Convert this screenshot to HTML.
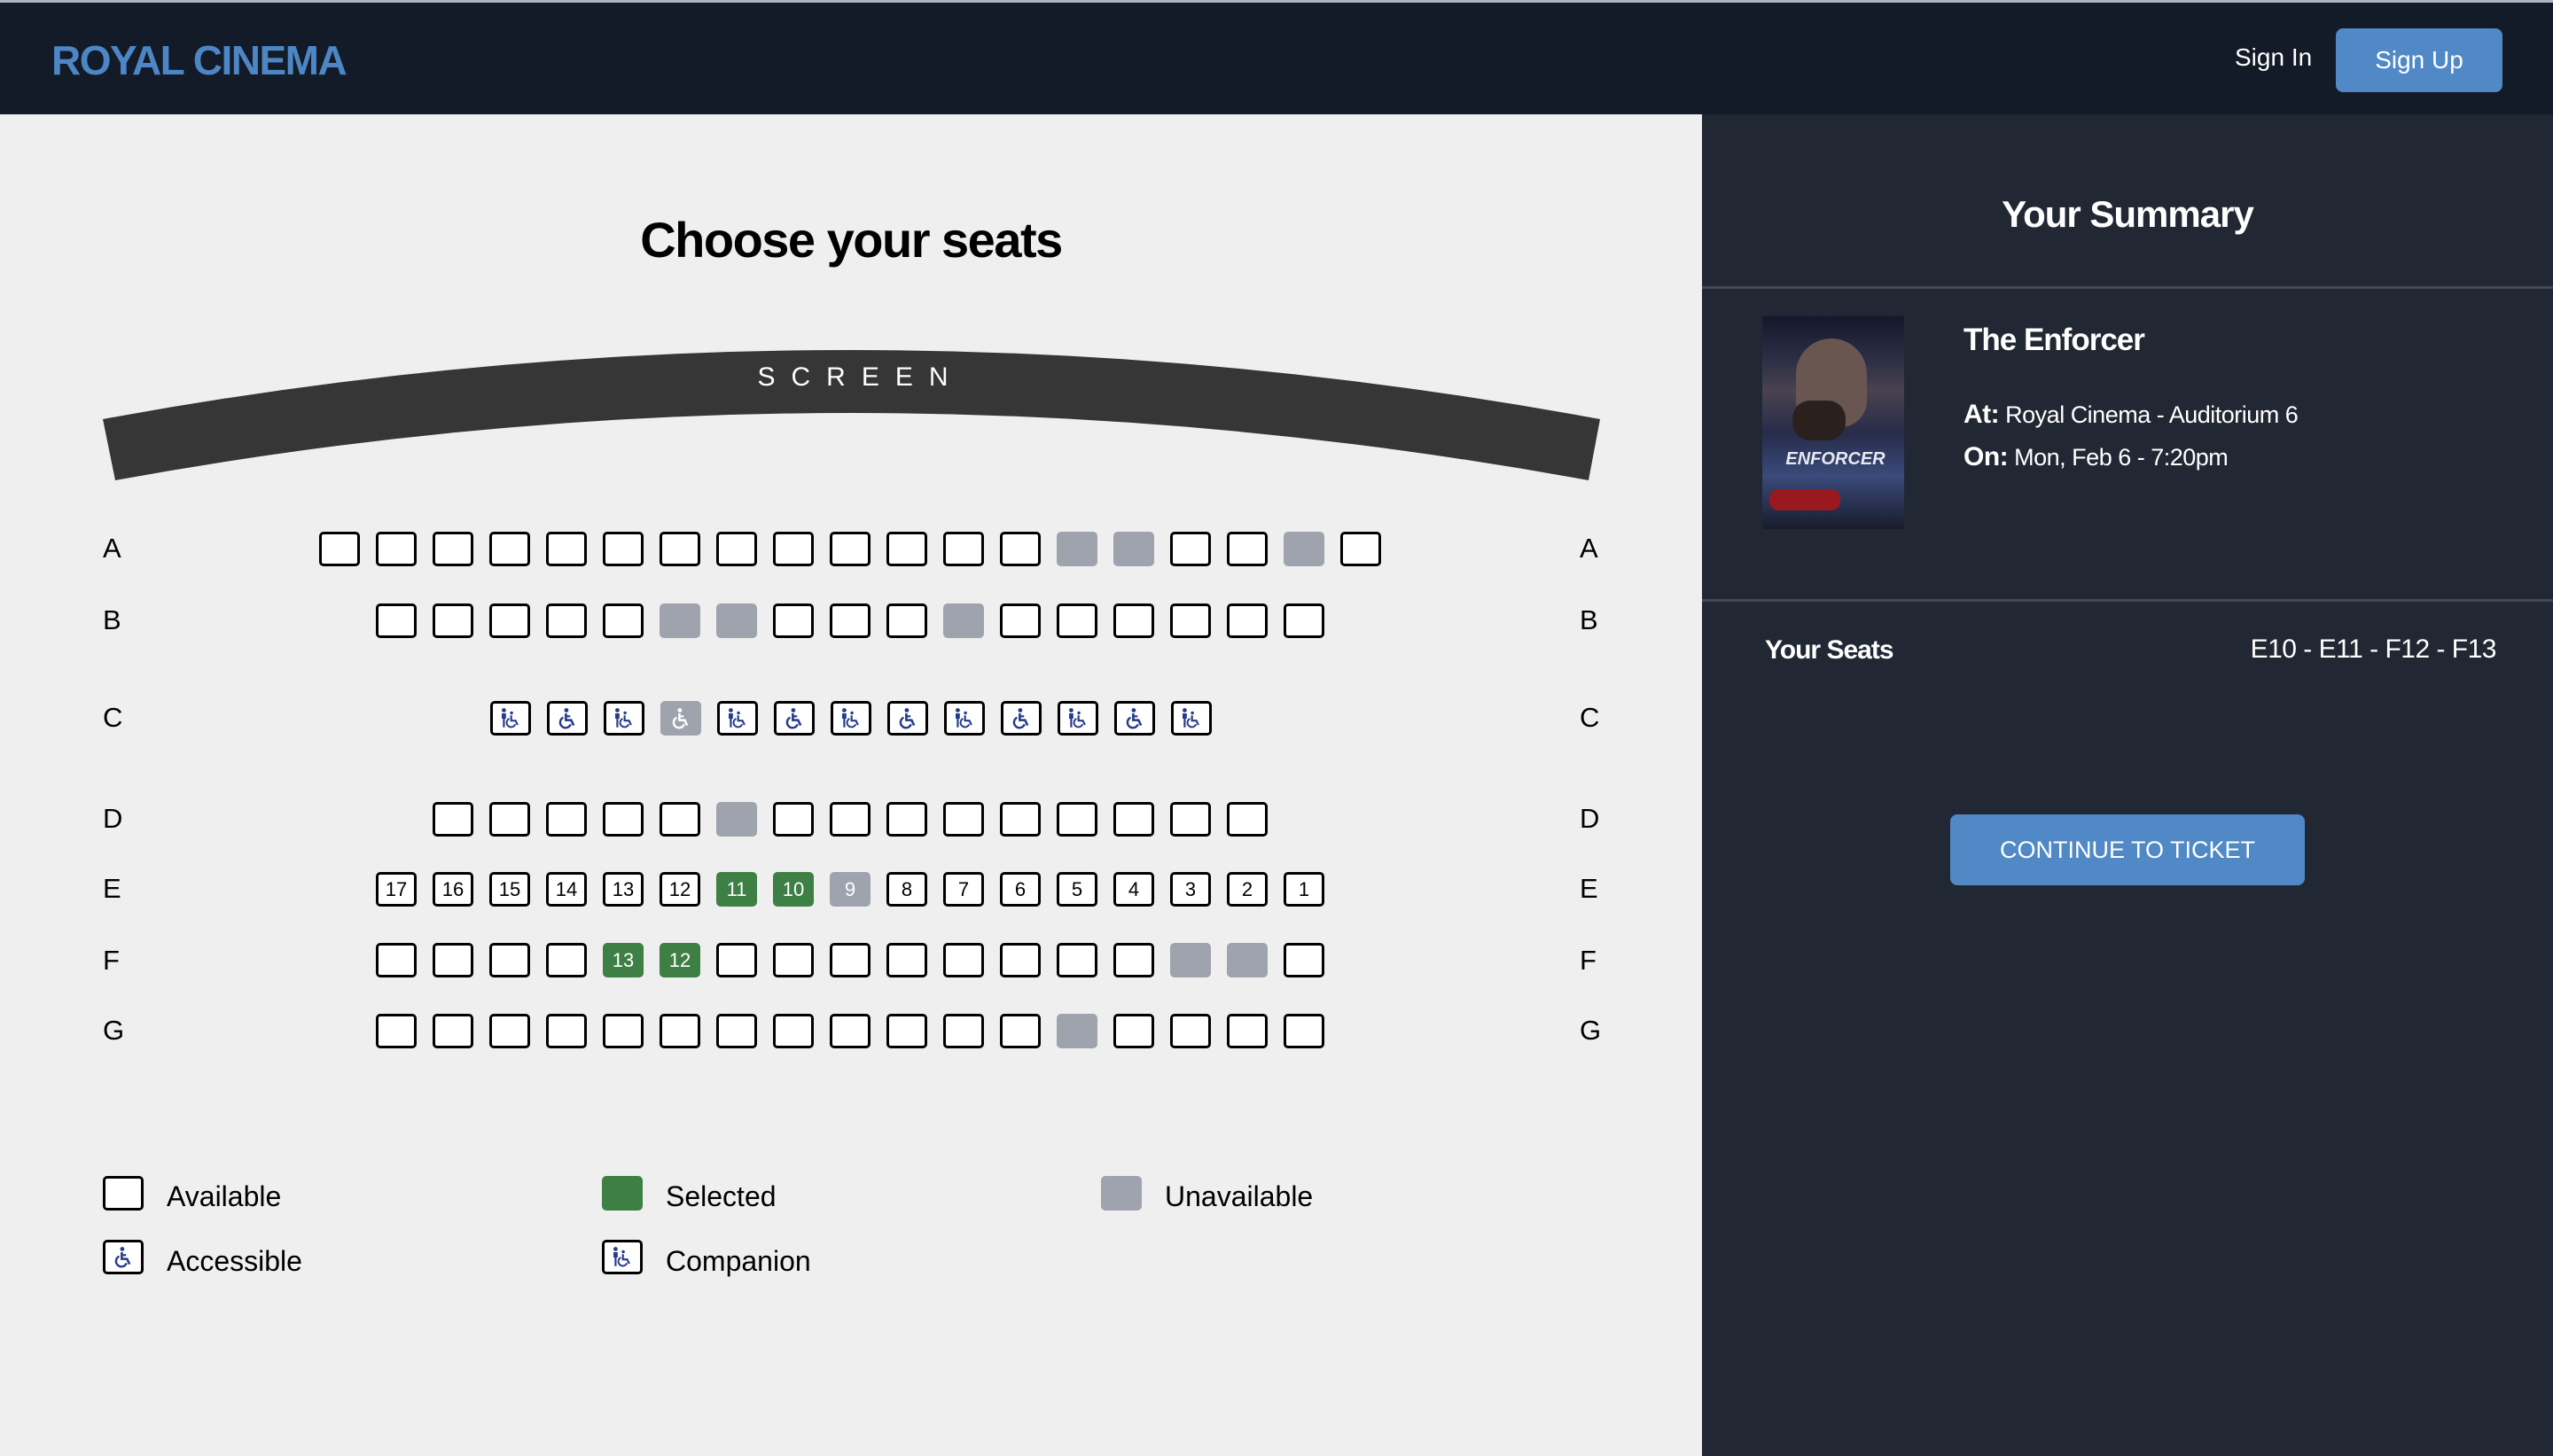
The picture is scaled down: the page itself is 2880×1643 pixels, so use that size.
<!DOCTYPE html>
<html><head><meta charset="utf-8"><style>
*{margin:0;padding:0;box-sizing:border-box}
body{width:2880px;height:1643px;overflow:hidden;font-family:"Liberation Sans",sans-serif;background:#efefef;position:relative}
.hdr{position:absolute;left:0;top:0;width:2880px;height:129px;background:#121b27;border-top:3px solid #a9b4c6}
.logo{position:absolute;left:58px;top:38px;font-size:46px;font-weight:bold;color:#4d86c4;letter-spacing:-1.5px}
.signin{position:absolute;left:2521px;top:46px;font-size:28px;color:#fff}
.signup{position:absolute;left:2635px;top:29px;width:188px;height:72px;background:#5089c6;border-radius:8px;color:#fff;font-size:28px;text-align:center;line-height:72px}
.right{position:absolute;left:1920px;top:129px;width:960px;height:1514px;background:#212733}
.abs{position:absolute}
.row{position:absolute;display:flex;gap:18px}
.s{width:46px;height:39px;border:3px solid #000;border-radius:5px;background:#fff;display:flex;align-items:center;justify-content:center;font-size:22px;color:#000}
.u{background:#9ea3ad;border-color:#9ea3ad}
.g{background:#3d7f45;border-color:#3d7f45;color:#fff}
.gu{background:#9ea3ad;border-color:#9ea3ad;color:#fff}
.lbl{position:absolute;font-size:31px;color:#000}
.leg{position:absolute;font-size:32px;color:#000}
svg.i{width:28px;height:26px;color:#253a8a}
.u svg.i{color:#fff}
</style></head><body>
<svg width="0" height="0" style="position:absolute">
<defs>
<symbol id="acc" viewBox="0 0 24 24"><circle cx="11" cy="3.2" r="2.2" fill="currentColor"/><path d="M10.5 6.5v7h5.5l2.6 5.5" fill="none" stroke="currentColor" stroke-width="2.4"/><path d="M10.5 9.5h4.5" stroke="currentColor" stroke-width="2"/><path d="M7.8 10.8a5.6 5.6 0 1 0 7.6 7" fill="none" stroke="currentColor" stroke-width="2.2"/></symbol>
<symbol id="comp" viewBox="0 0 24 24"><circle cx="5" cy="3.2" r="2.2" fill="currentColor"/><path d="M2.8 6.5h4.4v5.5h-1.2v9h-2v-9h-1.2z" fill="currentColor"/><circle cx="13" cy="6" r="1.6" fill="currentColor"/><path d="M12.6 8.5v5.5h4.5l2.2 4.5" fill="none" stroke="currentColor" stroke-width="2"/><path d="M10.5 12a4.6 4.6 0 1 0 6.3 5.8" fill="none" stroke="currentColor" stroke-width="1.8"/></symbol>
</defs></svg>

<div class="hdr"><div class="logo">ROYAL CINEMA</div><div class="signin">Sign In</div><div class="signup">Sign Up</div></div>

<div class="abs" style="left:0;top:238px;width:1920px;text-align:center;font-size:56px;font-weight:bold;color:#000;letter-spacing:-1.5px">Choose your seats</div>

<svg class="abs" style="left:0;top:0" width="1920" height="600">
<path d="M116,473 Q960,317 1805,473 L1792,542 Q960,390 130,542 Z" fill="#363636"/>
<text x="971" y="435" text-anchor="middle" fill="#fff" font-size="30" font-family="Liberation Sans" letter-spacing="18">SCREEN</text>
</svg>

<div class="lbl" style="left:116px;top:601px">A</div><div class="lbl" style="left:1782px;top:601px">A</div>
<div class="lbl" style="left:116px;top:682px">B</div><div class="lbl" style="left:1782px;top:682px">B</div>
<div class="lbl" style="left:116px;top:792px">C</div><div class="lbl" style="left:1782px;top:792px">C</div>
<div class="lbl" style="left:116px;top:906px">D</div><div class="lbl" style="left:1782px;top:906px">D</div>
<div class="lbl" style="left:116px;top:985px">E</div><div class="lbl" style="left:1782px;top:985px">E</div>
<div class="lbl" style="left:116px;top:1066px">F</div><div class="lbl" style="left:1782px;top:1066px">F</div>
<div class="lbl" style="left:116px;top:1145px">G</div><div class="lbl" style="left:1782px;top:1145px">G</div>

<div class="row" style="left:360px;top:600px"><div class="s"></div><div class="s"></div><div class="s"></div><div class="s"></div><div class="s"></div><div class="s"></div><div class="s"></div><div class="s"></div><div class="s"></div><div class="s"></div><div class="s"></div><div class="s"></div><div class="s"></div><div class="s u"></div><div class="s u"></div><div class="s"></div><div class="s"></div><div class="s u"></div><div class="s"></div></div>

<div class="row" style="left:424px;top:681px"><div class="s"></div><div class="s"></div><div class="s"></div><div class="s"></div><div class="s"></div><div class="s u"></div><div class="s u"></div><div class="s"></div><div class="s"></div><div class="s"></div><div class="s u"></div><div class="s"></div><div class="s"></div><div class="s"></div><div class="s"></div><div class="s"></div><div class="s"></div></div>

<div class="row" style="left:553px;top:791px">
<div class="s"><svg class="i"><use href="#comp"/></svg></div>
<div class="s"><svg class="i"><use href="#acc"/></svg></div>
<div class="s"><svg class="i"><use href="#comp"/></svg></div>
<div class="s u"><svg class="i"><use href="#acc"/></svg></div>
<div class="s"><svg class="i"><use href="#comp"/></svg></div>
<div class="s"><svg class="i"><use href="#acc"/></svg></div>
<div class="s"><svg class="i"><use href="#comp"/></svg></div>
<div class="s"><svg class="i"><use href="#acc"/></svg></div>
<div class="s"><svg class="i"><use href="#comp"/></svg></div>
<div class="s"><svg class="i"><use href="#acc"/></svg></div>
<div class="s"><svg class="i"><use href="#comp"/></svg></div>
<div class="s"><svg class="i"><use href="#acc"/></svg></div>
<div class="s"><svg class="i"><use href="#comp"/></svg></div>
</div>

<div class="row" style="left:488px;top:905px"><div class="s"></div><div class="s"></div><div class="s"></div><div class="s"></div><div class="s"></div><div class="s u"></div><div class="s"></div><div class="s"></div><div class="s"></div><div class="s"></div><div class="s"></div><div class="s"></div><div class="s"></div><div class="s"></div><div class="s"></div></div>

<div class="row" style="left:424px;top:984px"><div class="s">17</div><div class="s">16</div><div class="s">15</div><div class="s">14</div><div class="s">13</div><div class="s">12</div><div class="s g">11</div><div class="s g">10</div><div class="s gu">9</div><div class="s">8</div><div class="s">7</div><div class="s">6</div><div class="s">5</div><div class="s">4</div><div class="s">3</div><div class="s">2</div><div class="s">1</div></div>

<div class="row" style="left:424px;top:1064px"><div class="s"></div><div class="s"></div><div class="s"></div><div class="s"></div><div class="s g">13</div><div class="s g">12</div><div class="s"></div><div class="s"></div><div class="s"></div><div class="s"></div><div class="s"></div><div class="s"></div><div class="s"></div><div class="s"></div><div class="s u"></div><div class="s u"></div><div class="s"></div></div>

<div class="row" style="left:424px;top:1144px"><div class="s"></div><div class="s"></div><div class="s"></div><div class="s"></div><div class="s"></div><div class="s"></div><div class="s"></div><div class="s"></div><div class="s"></div><div class="s"></div><div class="s"></div><div class="s"></div><div class="s u"></div><div class="s"></div><div class="s"></div><div class="s"></div><div class="s"></div></div>

<div class="s abs" style="left:116px;top:1327px"></div><div class="leg" style="left:188px;top:1332px">Available</div>
<div class="s g abs" style="left:679px;top:1327px"></div><div class="leg" style="left:751px;top:1332px">Selected</div>
<div class="s u abs" style="left:1242px;top:1327px"></div><div class="leg" style="left:1314px;top:1332px">Unavailable</div>
<div class="s abs" style="left:116px;top:1399px"><svg class="i"><use href="#acc"/></svg></div><div class="leg" style="left:188px;top:1405px">Accessible</div>
<div class="s abs" style="left:679px;top:1399px"><svg class="i"><use href="#comp"/></svg></div><div class="leg" style="left:751px;top:1405px">Companion</div>

<div class="right">
<div class="abs" style="left:0;top:89px;width:960px;text-align:center;font-size:42px;font-weight:bold;color:#fff;letter-spacing:-1px">Your Summary</div>
<div class="abs" style="left:0;top:194px;width:960px;height:3px;background:#434957"></div>
<div class="abs" style="left:68px;top:228px;width:160px;height:240px;background:linear-gradient(180deg,#15162a 0%,#2b2e46 20%,#4a4250 35%,#272c4a 55%,#3a4a7a 75%,#191c2c 100%)">
 <div class="abs" style="left:38px;top:25px;width:80px;height:100px;border-radius:40px 40px 30px 30px;background:#6a5650"></div>
 <div class="abs" style="left:34px;top:95px;width:60px;height:45px;border-radius:20px;background:#2a211f"></div>
 <div class="abs" style="left:10px;top:150px;width:145px;text-align:center;color:#e8e8f0;font-size:20px;font-weight:bold;font-style:italic">ENFORCER</div>
 <div class="abs" style="left:8px;top:195px;width:80px;height:24px;border-radius:10px;background:#9a1820"></div>
</div>
<div class="abs" style="left:295px;top:235px;font-size:35px;font-weight:bold;color:#fff;letter-spacing:-1px">The Enforcer</div>
<div class="abs" style="left:295px;top:322px;font-size:27px;color:#fff;letter-spacing:-0.5px"><b style="font-size:30px">At:</b>&nbsp;Royal Cinema - Auditorium 6</div>
<div class="abs" style="left:295px;top:370px;font-size:27px;color:#fff;letter-spacing:-0.5px"><b style="font-size:30px">On:</b>&nbsp;Mon, Feb 6 - 7:20pm</div>
<div class="abs" style="left:0;top:547px;width:960px;height:3px;background:#434957"></div>
<div class="abs" style="left:71px;top:588px;font-size:30px;font-weight:bold;color:#fff;letter-spacing:-1px">Your Seats</div>
<div class="abs" style="right:64px;top:587px;font-size:30px;color:#fff;letter-spacing:-0.5px">E10 - E11 - F12 - F13</div>
<div class="abs" style="left:280px;top:790px;width:400px;height:80px;background:#5089c6;border-radius:8px;color:#fff;font-size:27px;text-align:center;line-height:80px">CONTINUE TO TICKET</div>
</div>
</body></html>
